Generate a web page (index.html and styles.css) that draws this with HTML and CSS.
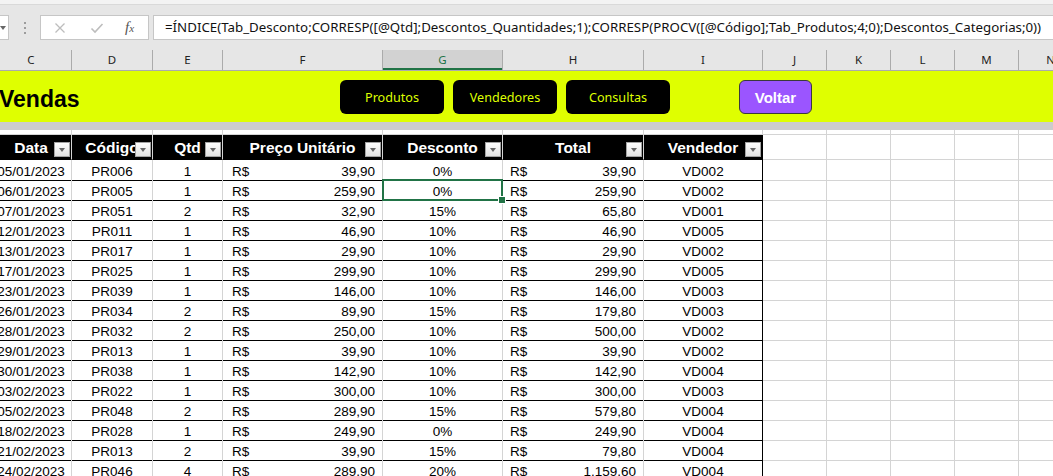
FILE: index.html
```html
<!DOCTYPE html>
<html lang="pt-BR">
<head>
  <meta charset="UTF-8">
  <meta name="viewport" content="width=device-width, initial-scale=1.0">
  <title>Vendas</title>
  <link rel="stylesheet" href="styles.css">
</head>
<body>
  <!-- barra de fórmulas -->
  <div class="formula-bar">
    <div class="name-box"></div>
    <div class="grip"><i></i><i></i><i></i></div>
    <div class="fx-buttons">
      <svg class="ico" width="12" height="12" viewBox="0 0 12 12">
        <path d="M1.5 1.5 L10.5 10.5 M10.5 1.5 L1.5 10.5" stroke="#bdbdbd" stroke-width="1.3" fill="none"/>
      </svg>
      <svg class="ico" width="14" height="12" viewBox="0 0 14 12">
        <path d="M1.5 6.5 L5 10 L12.5 2" stroke="#bdbdbd" stroke-width="1.6" fill="none"/>
      </svg>
      <span class="fx">f<span>x</span></span>
    </div>
    <div class="formula">=ÍNDICE(Tab_Desconto;CORRESP([@Qtd];Descontos_Quantidades;1);CORRESP(PROCV([@Código];Tab_Produtos;4;0);Descontos_Categorias;0))</div>
  </div>

  <div class="sheet">
    <div class="col-heads">
      <span>C</span><span>D</span><span>E</span><span>F</span><span class="active">G</span><span>H</span>
      <span>I</span><span>J</span><span>K</span><span>L</span><span>M</span><span>N</span>
    </div>

    <div class="banner">
      <h1 class="title">Vendas</h1>
      <nav class="nav">
        <button class="nav-btn">Produtos</button>
        <button class="nav-btn">Vendedores</button>
        <button class="nav-btn">Consultas</button>
      </nav>
      <button class="back-btn">Voltar</button>
    </div>
    <div class="strip"></div>

    <div class="row blank">
      <span></span><span></span><span></span><span></span><span></span><span></span><span></span><span class="pad"></span>
    </div>

    <div class="row head">
      <span>Data<i class="filter"></i></span>
      <span>Código<i class="filter"></i></span>
      <span>Qtd<i class="filter"></i></span>
      <span>Preço Unitário<i class="filter"></i></span>
      <span>Desconto<i class="filter"></i></span>
      <span>Total<i class="filter"></i></span>
      <span>Vendedor<i class="filter"></i></span>
      <span class="pad"></span>
    </div>

    <div class="row"><span>05/01/2023</span><span>PR006</span><span>1</span><span class="money price"><b>R$</b><b>39,90</b></span><span>0%</span><span class="money"><b>R$</b><b>39,90</b></span><span>VD002</span><span class="pad"></span></div>
    <div class="row"><span>06/01/2023</span><span>PR005</span><span>1</span><span class="money price"><b>R$</b><b>259,90</b></span><span class="sel">0%</span><span class="money"><b>R$</b><b>259,90</b></span><span>VD002</span><span class="pad"></span></div>
    <div class="row"><span>07/01/2023</span><span>PR051</span><span>2</span><span class="money price"><b>R$</b><b>32,90</b></span><span>15%</span><span class="money"><b>R$</b><b>65,80</b></span><span>VD001</span><span class="pad"></span></div>
    <div class="row"><span>12/01/2023</span><span>PR011</span><span>1</span><span class="money price"><b>R$</b><b>46,90</b></span><span>10%</span><span class="money"><b>R$</b><b>46,90</b></span><span>VD005</span><span class="pad"></span></div>
    <div class="row"><span>13/01/2023</span><span>PR017</span><span>1</span><span class="money price"><b>R$</b><b>29,90</b></span><span>10%</span><span class="money"><b>R$</b><b>29,90</b></span><span>VD002</span><span class="pad"></span></div>
    <div class="row"><span>17/01/2023</span><span>PR025</span><span>1</span><span class="money price"><b>R$</b><b>299,90</b></span><span>10%</span><span class="money"><b>R$</b><b>299,90</b></span><span>VD005</span><span class="pad"></span></div>
    <div class="row"><span>23/01/2023</span><span>PR039</span><span>1</span><span class="money price"><b>R$</b><b>146,00</b></span><span>10%</span><span class="money"><b>R$</b><b>146,00</b></span><span>VD003</span><span class="pad"></span></div>
    <div class="row"><span>26/01/2023</span><span>PR034</span><span>2</span><span class="money price"><b>R$</b><b>89,90</b></span><span>15%</span><span class="money"><b>R$</b><b>179,80</b></span><span>VD003</span><span class="pad"></span></div>
    <div class="row"><span>28/01/2023</span><span>PR032</span><span>2</span><span class="money price"><b>R$</b><b>250,00</b></span><span>10%</span><span class="money"><b>R$</b><b>500,00</b></span><span>VD002</span><span class="pad"></span></div>
    <div class="row"><span>29/01/2023</span><span>PR013</span><span>1</span><span class="money price"><b>R$</b><b>39,90</b></span><span>10%</span><span class="money"><b>R$</b><b>39,90</b></span><span>VD002</span><span class="pad"></span></div>
    <div class="row"><span>30/01/2023</span><span>PR038</span><span>1</span><span class="money price"><b>R$</b><b>142,90</b></span><span>10%</span><span class="money"><b>R$</b><b>142,90</b></span><span>VD004</span><span class="pad"></span></div>
    <div class="row"><span>03/02/2023</span><span>PR022</span><span>1</span><span class="money price"><b>R$</b><b>300,00</b></span><span>10%</span><span class="money"><b>R$</b><b>300,00</b></span><span>VD003</span><span class="pad"></span></div>
    <div class="row"><span>05/02/2023</span><span>PR048</span><span>2</span><span class="money price"><b>R$</b><b>289,90</b></span><span>15%</span><span class="money"><b>R$</b><b>579,80</b></span><span>VD004</span><span class="pad"></span></div>
    <div class="row"><span>18/02/2023</span><span>PR028</span><span>1</span><span class="money price"><b>R$</b><b>249,90</b></span><span>0%</span><span class="money"><b>R$</b><b>249,90</b></span><span>VD004</span><span class="pad"></span></div>
    <div class="row"><span>21/02/2023</span><span>PR013</span><span>2</span><span class="money price"><b>R$</b><b>39,90</b></span><span>15%</span><span class="money"><b>R$</b><b>79,80</b></span><span>VD004</span><span class="pad"></span></div>
    <div class="row"><span>24/02/2023</span><span>PR046</span><span>4</span><span class="money price"><b>R$</b><b>289,90</b></span><span>20%</span><span class="money"><b>R$</b><b>1.159,60</b></span><span>VD004</span><span class="pad"></span></div>
  </div>
</body>
</html>
```

FILE: styles.css
```css
* {
  box-sizing: border-box;
}

html, body {
  margin: 0;
}

body {
  width: 1053px;
  height: 476px;
  overflow: hidden;
  background: #fff;
  color: #000;
  font-family: "Liberation Sans", Arial, sans-serif;
}

/* formula bar */
.formula-bar {
  height: 50px;
  display: flex;
  align-items: flex-start;
  padding-top: 15px;
  background: linear-gradient(#f3f3f3 0 4px, #d9d9d9 4px 5px, #e6e6e6 5px);
}

.name-box {
  position: relative;
  width: 30px;
  height: 25px;
  margin-left: -21px;
  background: #fff;
  border: 1px solid #c6c6c6;
}

.name-box::after {
  content: "";
  position: absolute;
  right: 2px;
  top: 10px;
  border-top: 4px solid #666;
  border-left: 3.5px solid transparent;
  border-right: 3.5px solid transparent;
}

.grip {
  width: 31px;
  height: 25px;
  display: flex;
  flex-direction: column;
  align-items: center;
  justify-content: center;
  gap: 3px;
}

.grip i {
  width: 2px;
  height: 2px;
  background: #9c9c9c;
}

.fx-buttons {
  width: 109px;
  height: 25px;
  display: flex;
  align-items: center;
  background: #fff;
  border: 1px solid #c6c6c6;
  padding-left: 13px;
}

.fx-buttons .ico {
  display: block;
}

.fx-buttons .ico + .ico {
  margin-left: 24px;
}

.fx {
  margin-left: 21px;
  font-family: "Liberation Serif", serif;
  font-style: italic;
  font-size: 15px;
  color: #555;
}

.fx span {
  font-size: 11px;
}

.formula {
  flex: 1;
  height: 25px;
  margin-left: 4px;
  margin-right: -10px;
  padding-left: 11px;
  background: #fff;
  border: 1px solid #c6c6c6;
  font-family: "Noto Sans", sans-serif;
  font-size: 13.3px;
  line-height: 22px;
  white-space: nowrap;
  overflow: hidden;
  color: #111;
}

/* worksheet */
.sheet {
  margin-left: -9px;
}

.col-heads,
.row {
  display: grid;
  grid-template-columns: 81px 81px 70px 160px 120px 141px 119px 1fr;
}

.col-heads {
  grid-template-columns: 81px 81px 70px 160px 120px 141px 119px 64px 64px 64px 64px 64px;
  height: 21px;
  background: #e6e6e6;
  border-bottom: 1px solid #ababab;
}

.col-heads span {
  border-right: 1px solid #ababab;
  text-align: center;
  font-family: "Noto Sans", sans-serif;
  font-size: 11.5px;
  line-height: 20px;
  color: #222;
}

.col-heads .active {
  background: #d2d2d2;
  color: #217346;
  box-shadow: inset 0 -2px 0 #217346;
}

.banner {
  height: 51px;
  display: flex;
  align-items: center;
  background: #dfff00;
}

.title {
  width: 349px;
  margin: 0;
  padding: 5px 0 0 8px;
  font-size: 23px;
  font-weight: bold;
}

.nav {
  display: flex;
  gap: 9px;
}

.nav-btn {
  width: 104px;
  height: 34px;
  margin-top: 1px;
  border: none;
  border-radius: 6px;
  background: #000;
  color: #dfff00;
  font-family: "Noto Sans", sans-serif;
  font-size: 12.6px;
}

.back-btn {
  width: 73px;
  height: 34px;
  margin: 1px 0 0 69px;
  border: 1px solid #3a3a3a;
  border-radius: 6px;
  background: #9b55ff;
  color: #fff;
  font-family: "Liberation Sans", Arial, sans-serif;
  font-size: 15px;
  font-weight: bold;
}

.strip {
  height: 8px;
  background: #cccccc;
}

/* grid rows */
.row {
  height: 20px;
}

.row span {
  position: relative;
  border-right: 1px solid #d4d4d4;
  border-bottom: 1px solid #000;
  text-align: center;
  font-size: 13.5px;
  line-height: 17px;
  padding-top: 3px;
  white-space: nowrap;
}

.row span:nth-child(7) {
  border-right-color: #000;
}

.row .pad {
  border-right: none;
  border-bottom-color: #d4d4d4;
  background: repeating-linear-gradient(to right, transparent 0 63px, #d4d4d4 63px 64px);
}

.row.blank {
  height: 5px;
}

.row.blank span {
  border-bottom-color: #d4d4d4;
  border-right-color: #d4d4d4;
  padding: 0;
}

.row.head {
  height: 25px;
}

.row.head span {
  background: #000;
  color: #fff;
  font-weight: bold;
  font-size: 15.5px;
  line-height: 23px;
  padding-top: 1px;
  overflow: hidden;
}

.row.head .pad {
  background: repeating-linear-gradient(to right, transparent 0 63px, #d4d4d4 63px 64px);
}

.filter {
  position: absolute;
  right: 1px;
  top: 7px;
  width: 16px;
  height: 15px;
  background: linear-gradient(#fdfdfd, #e2e2e2);
  border: 1px solid #a3a3a3;
}

.filter::after {
  content: "";
  position: absolute;
  left: 4px;
  top: 5px;
  border-top: 4px solid #666;
  border-left: 3.5px solid transparent;
  border-right: 3.5px solid transparent;
}

.money {
  display: flex;
  justify-content: space-between;
  padding: 3px 7px 0 7px;
}

.money.price {
  padding-left: 9px;
}

.money b {
  font-weight: normal;
}

/* selected cell */
.sel::before {
  content: "";
  position: absolute;
  left: -1px;
  top: -1px;
  right: -1px;
  bottom: -1px;
  border: 2px solid #217346;
  z-index: 1;
}

.sel::after {
  content: "";
  position: absolute;
  right: -4px;
  bottom: -4px;
  width: 6px;
  height: 6px;
  background: #217346;
  border: 1px solid #fff;
  z-index: 2;
}
```
